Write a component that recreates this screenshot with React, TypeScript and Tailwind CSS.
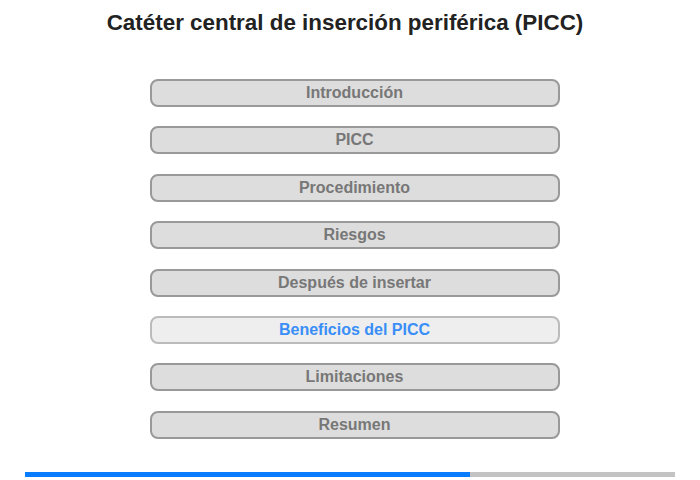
const items = [
  "Introducción",
  "PICC",
  "Procedimiento",
  "Riesgos",
  "Después de insertar",
  "Beneficios del PICC",
  "Limitaciones",
  "Resumen",
];

const active = "Beneficios del PICC";

export default function App() {
  return (
    <div className="flex h-[480px] w-[700px] flex-col bg-white font-['Liberation_Sans',Arial,sans-serif]">
      <h1 className="mt-[10px] pr-[10px] text-center text-[22.4px] font-bold leading-[26px] text-[#222]">
        Catéter central de inserción periférica (PICC)
      </h1>

      <ul className="mt-[43px] flex flex-col items-center gap-[19.4px] pl-[9px]">
        {items.map((item) => {
          const isActive = item === active;
          return (
            <li key={item}>
              <button
                className={
                  isActive
                    ? "h-[28px] w-[410px] rounded-[8px] border-2 border-[#bbb] bg-[#eee] text-[16px] font-bold leading-[24px] text-[#3a8ef7]"
                    : "h-[28px] w-[410px] rounded-[8px] border-2 border-[#999] bg-[#ddd] text-[16px] font-bold leading-[24px] text-[#777]"
                }
              >
                {item}
              </button>
            </li>
          );
        })}
      </ul>

      <div className="mx-[25px] mt-auto mb-[3px] flex h-[5px]">
        <div className="w-[445px] bg-[#0a7cff]" />
        <div className="flex-1 bg-[#c3c3c3]" />
      </div>
    </div>
  );
}
